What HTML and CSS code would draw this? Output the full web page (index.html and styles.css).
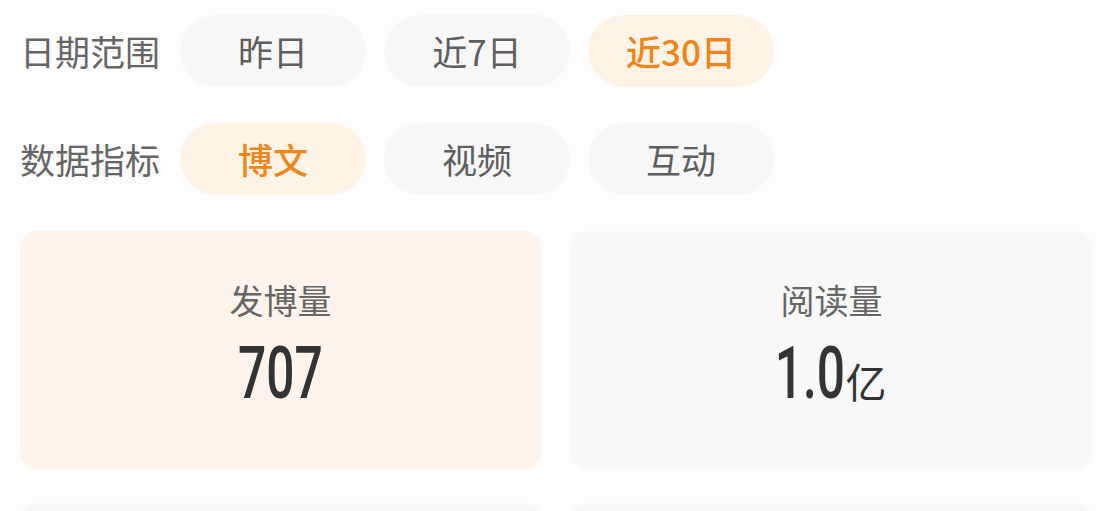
FILE: index.html
```html
<!DOCTYPE html>
<html lang="zh-CN">
<head>
<meta charset="utf-8">
<title>数据概览</title>
<link rel="stylesheet" href="styles.css">
</head>
<body>
<div class="page">
  <div class="filter-row">
    <div class="filter-label">日期范围</div>
    <div class="pill">昨日</div>
    <div class="pill">近7日</div>
    <div class="pill active">近30日</div>
  </div>
  <div class="filter-row">
    <div class="filter-label">数据指标</div>
    <div class="pill active">博文</div>
    <div class="pill">视频</div>
    <div class="pill">互动</div>
  </div>
  <div class="cards">
    <div class="card highlight">
      <div class="card-label">发博量</div>
      <div class="card-value"><span class="num">707</span></div>
    </div>
    <div class="card">
      <div class="card-label">阅读量</div>
      <div class="card-value"><span class="num">1.0</span><span class="unit">亿</span></div>
    </div>
    <div class="card"></div>
    <div class="card"></div>
  </div>
</div>
</body>
</html>
```
FILE: styles.css
```css
html, body {
  margin: 0;
  padding: 0;
  background: #fdfdfd;
}
body {
  font-family: "Noto Sans CJK SC", "Noto Sans", sans-serif;
  color: #666;
}
.page {
  display: flex;
  flex-direction: column;
  gap: 36px;
  padding: 15px 18px 0 20px;
}
.filter-row {
  display: flex;
  align-items: center;
  gap: 18px;
  height: 72px;
}
.filter-label {
  flex: 0 0 142px;
  font-size: 35px;
  line-height: 40px;
  color: #666;
}
.pill {
  flex: 0 0 186px;
  height: 72px;
  border-radius: 36px;
  background: #f7f7f7;
  color: #5e5e5e;
  font-size: 35px;
  line-height: 72px;
  text-align: center;
}
.pill.active {
  background: #fff3e7;
  color: #f08519;
  font-weight: 500;
}
.cards {
  display: grid;
  grid-template-columns: 1fr 1fr;
  column-gap: 30px;
  row-gap: 34px;
}
.card {
  height: 238px;
  box-sizing: border-box;
  padding-bottom: 10px;
  border-radius: 16px;
  background: #f8f8f8;
  display: flex;
  flex-direction: column;
  align-items: center;
  justify-content: center;
  gap: 18px;
}
.card.highlight {
  background: #fef4ec;
}
.card-label {
  font-size: 34px;
  line-height: 40px;
  color: #666;
}
.card-value {
  line-height: 72px;
  height: 72px;
  color: #333;
  white-space: nowrap;
}
.num {
  display: inline-block;
  font-family: Roboto, "DejaVu Sans", sans-serif;
  font-weight: 500;
  font-size: 72px;
  transform: scaleX(0.69);
  margin: 0 -0.25em;
}
.unit {
  font-size: 41px;
  margin-left: 3px;
}
```
